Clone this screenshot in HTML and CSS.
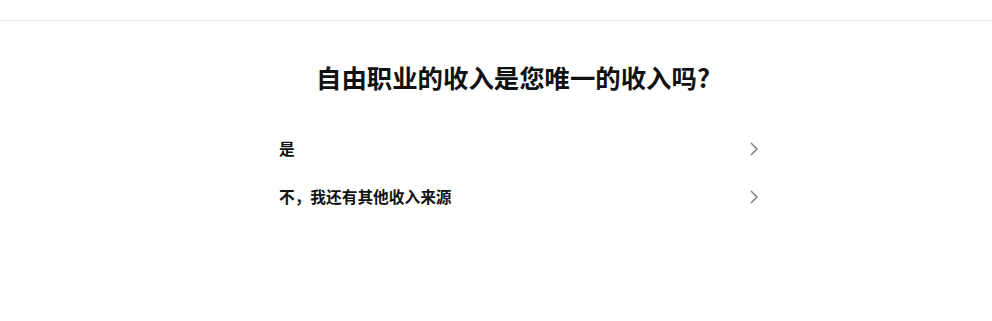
FILE: index.html
```html
<!DOCTYPE html>
<html lang="zh-CN">
<head>
    <meta charset="UTF-8">
    <meta name="viewport" content="width=device-width, initial-scale=1.0">
    <title>收入来源</title>
    <link rel="stylesheet" href="styles.css">
</head>
<body>
    <header class="topbar"></header>
    <main class="page">
        <h1 class="question">自由职业的收入是您唯一的收入吗?</h1>
        <ul class="options">
            <li class="option">
                <span class="option-label">是</span>
                <svg class="chevron" width="8" height="14" viewBox="0 0 8 14">
                    <path d="M1 1l6 6-6 6" fill="none" stroke="#777" stroke-width="1.4"/>
                </svg>
            </li>
            <li class="option">
                <span class="option-label">不，我还有其他收入来源</span>
                <svg class="chevron" width="8" height="14" viewBox="0 0 8 14">
                    <path d="M1 1l6 6-6 6" fill="none" stroke="#777" stroke-width="1.4"/>
                </svg>
            </li>
        </ul>
    </main>
</body>
</html>
```

FILE: styles.css
```css
body {
    margin: 0;
    font-family: "Noto Sans CJK SC", "Liberation Sans", sans-serif;
    background-color: #fff;
    color: #111;
}
.topbar {
    height: 20px;
    border-bottom: 1px solid #e3e3e3;
}
.page {
    padding: 36px 0 0 34px;
}
.question {
    margin: 0;
    text-align: center;
    font-size: 25.4px;
    line-height: 40px;
    font-weight: 700;
}
.options {
    list-style: none;
    margin: 27px 0 0 calc(50% - 240px);
    padding: 0;
    width: 490px;
}
.option {
    display: flex;
    justify-content: space-between;
    align-items: center;
    height: 48px;
    padding: 0 5px 0 6px;
    cursor: pointer;
}
.option-label {
    font-size: 15.7px;
    font-weight: 700;
}
.chevron {
    display: block;
    margin-top: 2px;
}
```
